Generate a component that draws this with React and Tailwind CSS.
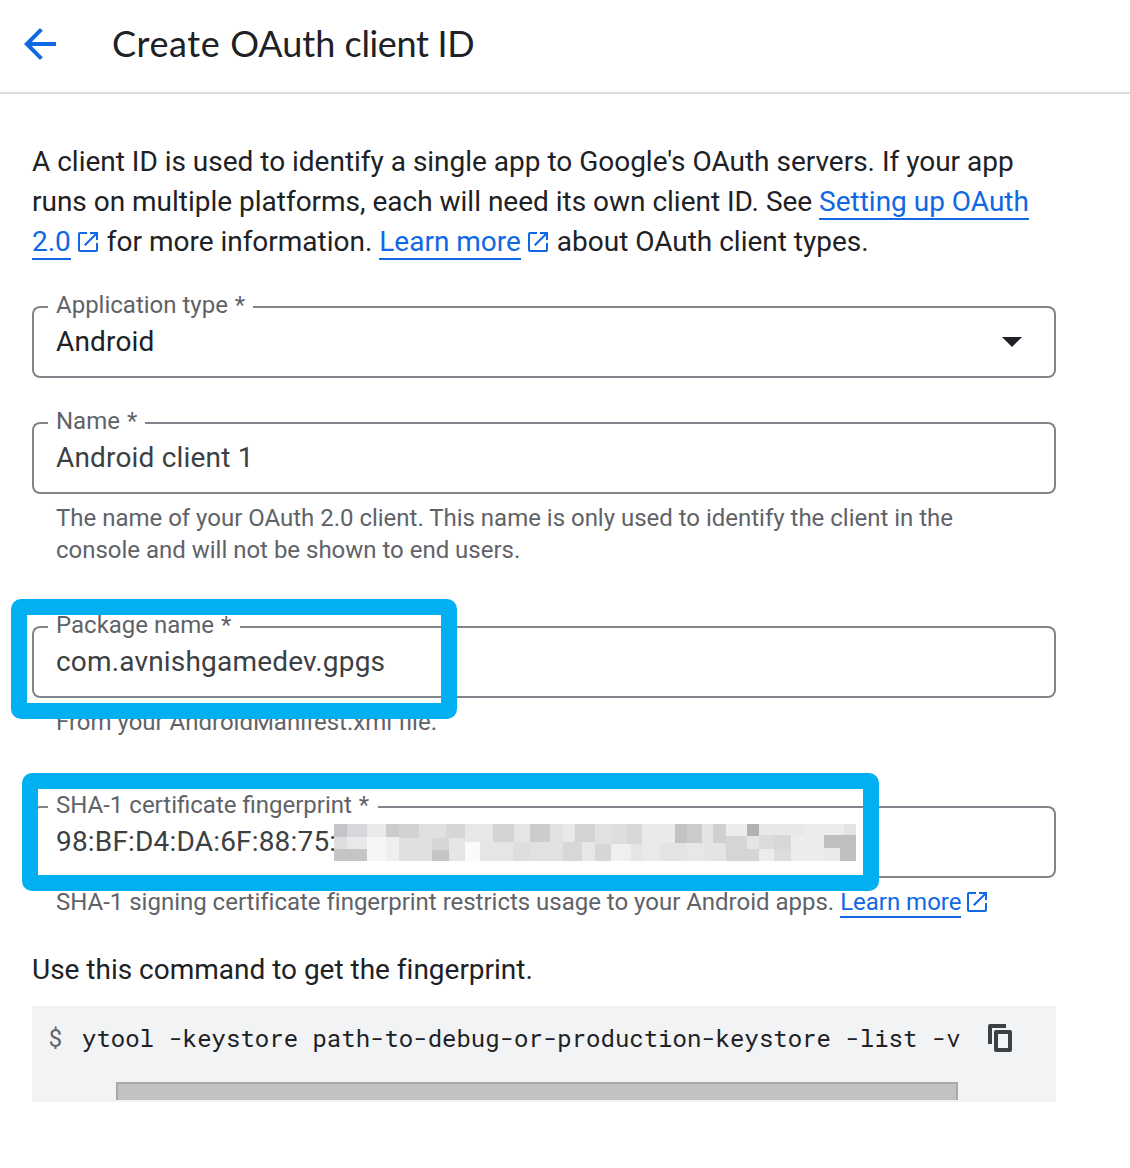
import React from "react";

const MOSAIC = [
  [0, 0, 13, 13, "#c4c5c8"], [13, 0, 20, 13, "#d7d8db"], [33, 0, 19, 13, "#e9ebea"], [52, 0, 13, 13, "#cbccce"],
  [65, 0, 20, 14, "#d2d2d2"], [85, 0, 27, 14, "#dfe0e0"], [112, 0, 19, 14, "#d5d6d8"], [131, 0, 28, 18, "#e7e7e7"],
  [159, 0, 21, 18, "#d4d4d4"], [180, 0, 16, 18, "#e4e6e6"], [196, 0, 20, 18, "#cbccce"], [216, 0, 13, 18, "#e1e1e1"],
  [229, 0, 12, 18, "#e8e8e8"], [241, 0, 20, 18, "#d3d3d3"], [0, 13, 13, 12, "#dededf"], [13, 13, 20, 12, "#e9e9e9"],
  [0, 25, 33, 12, "#c4c5c7"], [33, 13, 19, 24, "#f5f6f6"], [52, 13, 13, 24, "#eef0f0"], [65, 14, 33, 23, "#dfe1e1"],
  [98, 14, 17, 12, "#d5d6d8"], [98, 26, 17, 11, "#c4c5c7"], [115, 14, 16, 23, "#e4e6e6"], [131, 18, 15, 19, "#fafafa"],
  [146, 18, 33, 19, "#e4e6e6"], [179, 18, 17, 19, "#dedede"], [196, 18, 33, 19, "#e1e1e1"], [229, 18, 19, 19, "#d6d8d7"],
  [248, 18, 13, 19, "#e8e8e8"],
  [261, 0, 16, 20, "#e0e2e1"], [277, 0, 16, 20, "#dddfde"], [293, 0, 15, 20, "#d7d9d8"], [308, 0, 33, 20, "#e9ebea"],
  [341, 0, 12, 19, "#c1c2c4"], [353, 0, 15, 19, "#cacbcd"], [368, 0, 11, 19, "#e4e4e4"], [379, 0, 13, 19, "#cfd0d2"],
  [392, 0, 21, 12, "#ebeded"], [413, 0, 12, 12, "#b0b1b3"], [425, 0, 45, 11, "#e8e8e8"], [470, 0, 40, 11, "#ececec"],
  [510, 0, 12, 11, "#e4e4e4"], [261, 20, 16, 17, "#d6d6d6"], [277, 20, 20, 17, "#efefef"], [297, 20, 14, 17, "#e4e6e5"],
  [308, 20, 3, 17, "#e8eae9"], [311, 19, 15, 18, "#e8eae9"], [326, 19, 27, 18, "#e4e4e4"], [353, 19, 18, 18, "#e6e8e7"],
  [371, 19, 21, 18, "#e4e4e4"], [392, 12, 33, 25, "#d4d5d7"], [413, 12, 12, 13, "#e4e6e5"], [425, 11, 15, 14, "#dadcdb"],
  [440, 11, 17, 14, "#d6d8d7"], [425, 25, 15, 12, "#ececec"], [440, 25, 17, 12, "#dbdcde"], [457, 11, 33, 26, "#ececec"],
  [490, 11, 32, 13, "#bebfc1"], [490, 24, 16, 13, "#e9ebea"], [506, 24, 16, 13, "#bebfc1"],
];

function OpenInNew({ className = "" }) {
  return (
    <svg viewBox="0 0 20 20" className={`inline-block h-5 w-5 shrink-0 fill-[#1068e4] ${className}`}>
      <path d="M2 0h7v2H2v16h16v-7h2v7a2 2 0 0 1-2 2H2a2 2 0 0 1-2-2V2a2 2 0 0 1 2-2zM12 0h8v8h-2V3.6L7.5 14.1 6 12.6 16.6 2H12z" />
    </svg>
  );
}

function Link({ children, className = "" }) {
  return (
    <a className={`inline-block border-b-2 border-[#1068e4] text-[#1068e4] ${className}`}>{children}</a>
  );
}

function Field({ label, labelWidth, children }) {
  return (
    <div className="grid h-[72px]">
      <div className="col-start-1 row-start-1 flex h-[72px]">
        <div className="w-4 rounded-l-lg border-2 border-r-0 border-[#80868b]" />
        <div
          className="border-b-2 border-[#80868b] px-2 text-[24px] leading-7 whitespace-nowrap text-[#5f6368]"
          style={{ width: labelWidth }}
        >
          <span className="-mt-[15px] block">
            {label} <span className="ml-px">*</span>
          </span>
        </div>
        <div className="flex-1 rounded-r-lg border-2 border-l-0 border-[#80868b]" />
      </div>
      <div className="col-start-1 row-start-1 flex items-center pr-[34px] pl-6 text-[28px] leading-10 tracking-[0.18px] text-[#3c4043]">
        {children}
      </div>
    </div>
  );
}

export default function App() {
  return (
    <div className="h-[1168px] w-[1130px] overflow-hidden bg-white font-['Roboto',sans-serif] text-[#202124]">
      <header className="flex h-[94px] items-center border-b-2 border-[#dadce0] pb-1">
        <svg viewBox="0 0 32 32" className="ml-6 h-8 w-8 fill-[#1068e4]">
          <path d="M32 14v4H7.7l11.1 11.2L16 32 0 16 16 0l2.8 2.8L7.7 14z" />
        </svg>
        <h1 className="ml-14 pb-0.5 font-['Lato',sans-serif] text-[36px] leading-[44px] whitespace-nowrap">
          <span className="tracking-[0.6px]">Create </span>
          <span>OAuth </span>
          <span className="tracking-[-0.35px]">client ID</span>
        </h1>
      </header>

      <main className="w-[1056px] pl-8">
        <div className="pt-12 text-[28px] leading-10 tracking-[-0.012px] whitespace-nowrap">
          <div className="h-10">
            A client ID is used to identify a single app to Google's OAuth servers. If your app
          </div>
          <div className="h-10">
            runs on multiple platforms, each will need its own client ID. See{" "}
            <Link className="h-[38px]">Setting up OAuth</Link>
          </div>
          <div className="flex h-10">
            <Link className="h-[38px]">2.0</Link>
            <OpenInNew className="mt-2.5 mr-[9px] ml-[7px]" />
            <span>for more information.</span>
            <Link className="ml-[7px] h-[38px]">Learn more</Link>
            <OpenInNew className="mt-2.5 mr-[9px] ml-[7px]" />
            <span>about OAuth client types.</span>
          </div>
        </div>

        <section className="mt-11">
          <Field label="Application type" labelWidth={205}>
            <span className="flex-1 text-[#202124]">Android</span>
            <svg viewBox="0 0 20 10" className="h-2.5 w-5 fill-[#202124]">
              <path d="M0 0h20L10 10z" />
            </svg>
          </Field>
        </section>

        <section className="mt-11">
          <Field label="Name" labelWidth={97}>
            <span>Android client 1</span>
          </Field>
          <p className="mt-2 pl-6 text-[24px] leading-8 tracking-[-0.012px] whitespace-nowrap text-[#5f6368]">
            The name of your OAuth 2.0 client. This name is only used to identify the client in the
            <br />
            console and will not be shown to end users.
          </p>
        </section>

        <section className="relative mt-15 h-[112px]">
          <Field label="Package name" labelWidth={192}>
            <span>com.avnishgamedev.gpgs</span>
          </Field>
          <p className="mt-2 pl-6 text-[24px] leading-8 tracking-[-0.012px] whitespace-nowrap text-[#5f6368]">
            From your AndroidManifest.xml file.
          </p>
          <div className="absolute -top-[27px] -left-[21px] h-[120px] w-[446px] rounded-[10px] bg-[#00b0f0] [clip-path:polygon(evenodd,0_0,446px_0,446px_120px,0_120px,0_0,16px_16px,430px_16px,430px_104px,16px_104px,16px_16px)]" />
        </section>

        <section className="relative mt-17">
          <Field label="SHA-1 certificate fingerprint" labelWidth={330}>
            <span className="w-[278px] whitespace-nowrap">98:BF:D4:DA:6F:88:75:</span>
            <svg viewBox="0 0 522 37" className="h-[37px] w-[522px] shrink-0" shapeRendering="crispEdges">
              {MOSAIC.map(([x, y, w, h, fill], i) => (
                <rect key={i} x={x} y={y} width={w} height={h} fill={fill} />
              ))}
            </svg>
          </Field>
          <div className="mt-2 flex h-8 pl-6 text-[24px] leading-8 tracking-[-0.012px] whitespace-nowrap text-[#5f6368]">
            <span>SHA-1 signing certificate fingerprint restricts usage to your Android apps.</span>
            <Link className="ml-1.5 h-8">Learn more</Link>
            <OpenInNew className="mt-1.5 ml-1.5" />
          </div>
          <div className="absolute -top-[33px] -left-[10px] h-[118px] w-[857px] rounded-[10px] bg-[#00b0f0] [clip-path:polygon(evenodd,0_0,857px_0,857px_118px,0_118px,0_0,16px_16px,841px_16px,841px_102px,16px_102px,16px_16px)]" />
        </section>

        <p className="mt-8 text-[28px] leading-10 tracking-[-0.012px] whitespace-nowrap">
          Use this command to get the fingerprint.
        </p>
        <div className="mt-4 h-24 bg-[#f1f3f4] font-['Roboto_Mono','Liberation_Mono',monospace] text-[24px] leading-8">
          <div className="flex h-[76px] items-start pt-4 pl-4">
            <span className="w-[34px] text-[#5f6368]">$</span>
            <span className="w-[878px] whitespace-nowrap">
              ytool -keystore path-to-debug-or-production-keystore -list -v
            </span>
            <svg viewBox="0 0 24 28" className="mt-0.5 ml-7 h-7 w-6 fill-[#3c4043]">
              <path d="M2 0h16v4H4v16H0V2a2 2 0 0 1 2-2z" />
              <path
                fillRule="evenodd"
                d="M8 6h14a2 2 0 0 1 2 2v18a2 2 0 0 1-2 2H8a2 2 0 0 1-2-2V8a2 2 0 0 1 2-2zm2 4v14h10V10z"
              />
            </svg>
          </div>
          <div className="ml-21 h-[18px] w-[842px] border-x-2 border-t-2 border-[#a8a9aa] bg-[#c1c2c3]" />
        </div>
      </main>
    </div>
  );
}
